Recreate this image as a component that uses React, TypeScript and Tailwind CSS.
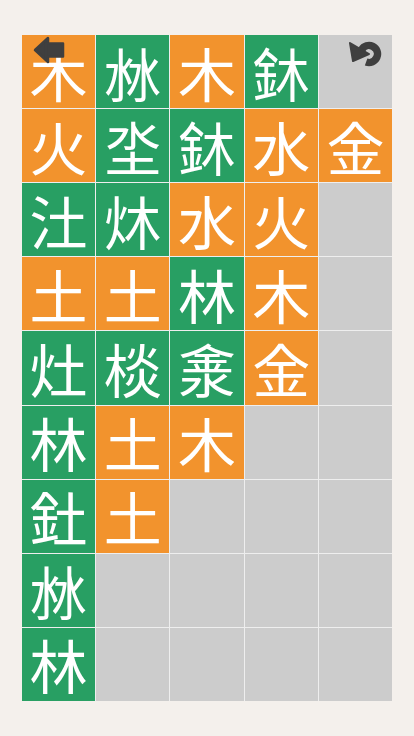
import React from 'react';

// --- Board data: O = orange (element), G = green (combined), null = empty ---
type Cell = { ch: string; c: 'O' | 'G' } | null;

const o = (ch: string): Cell => ({ ch, c: 'O' });
const g = (ch: string): Cell => ({ ch, c: 'G' });

const BOARD: Cell[][] = [
    [o('木'), g('沝'), o('木'), g('鈢'), null],
    [o('火'), g('坔'), g('鈢'), o('水'), o('金')],
    [g('汢'), g('炑'), o('水'), o('火'), null],
    [o('土'), o('土'), g('林'), o('木'), null],
    [g('灶'), g('棪'), g('淾'), o('金'), null],
    [g('林'), o('土'), o('木'), null, null],
    [g('釷'), o('土'), null, null, null],
    [g('沝'), null, null, null, null],
    [g('林'), null, null, null, null],
];

function BackArrow() {
    return (
        <svg width="32" height="28" viewBox="0 0 32 28" className="absolute left-[11px] top-[1px]">
            <g fill="#3f3f3f" stroke="#3f3f3f" strokeWidth="2.5" strokeLinejoin="round">
                <polygon points="2,14 15,2 15,26" />
                <rect x="13" y="7.5" width="17" height="13" />
            </g>
        </svg>
    );
}

function UndoIcon() {
    return (
        <svg width="34" height="32" viewBox="0 0 34 32" className="absolute left-[326px] top-[3px]">
            <path
                d="M 13.6 11.8 A 8.5 8.5 0 1 1 18.1 24"
                fill="none"
                stroke="#3f3f3f"
                strokeWidth="7.5"
            />
            <polygon
                points="2,5 21,16 5,23"
                fill="#3f3f3f"
                stroke="#3f3f3f"
                strokeWidth="2"
                strokeLinejoin="round"
            />
        </svg>
    );
}

export default function App() {
    return (
        <div className="min-h-[736px] bg-[#f4f0ec] pt-[35px] pl-[22px]">
            <div className="relative w-[370px]">
                <div className="grid grid-cols-5 grid-rows-9 gap-px w-[370px] h-[666px] bg-[#eeeeee]">
                    {BOARD.flat().map((cell, i) => (
                        <div
                            key={i}
                            className={`flex items-center justify-center text-white text-[58px] leading-none font-normal ${
                                cell === null ? 'bg-[#cccccc]' : cell.c === 'O' ? 'bg-[#f2932d]' : 'bg-[#289f63]'
                            }`}
                            style={{ fontFamily: '"Noto Sans CJK JP", "Noto Sans CJK SC", serif' }}
                        >
                            {cell?.ch}
                        </div>
                    ))}
                </div>
                <BackArrow />
                <UndoIcon />
            </div>
        </div>
    );
}
